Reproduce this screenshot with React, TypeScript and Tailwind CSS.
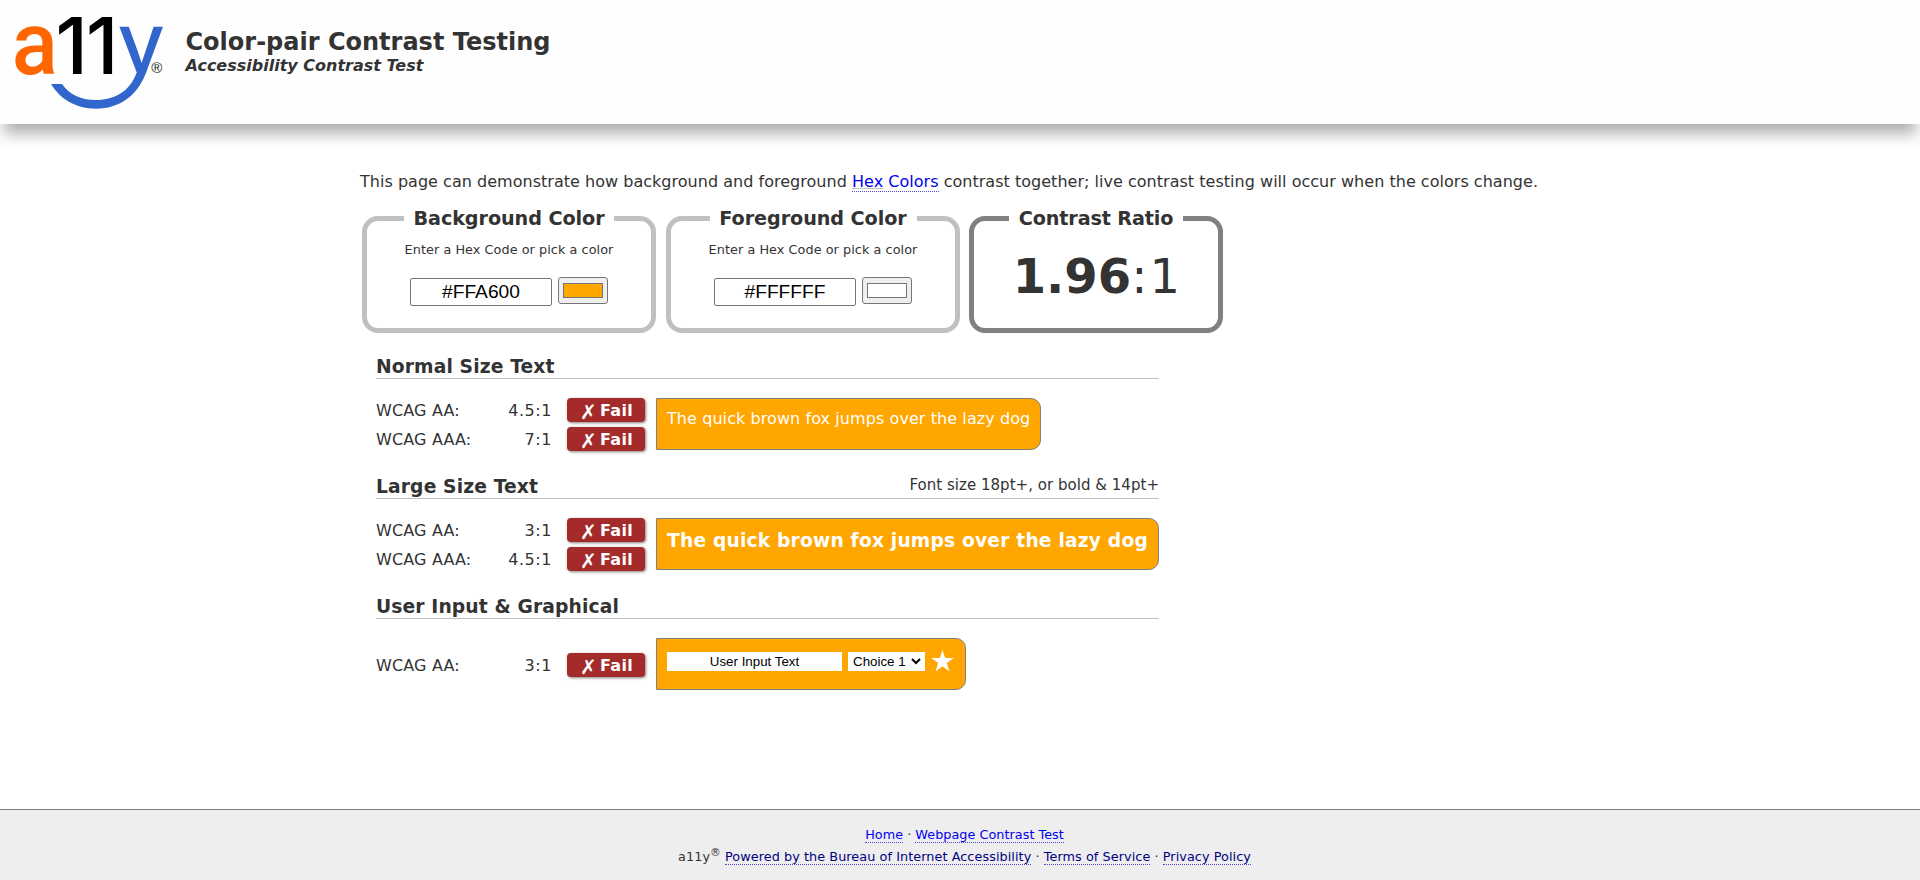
import React from "react";

function Logo() {
  return (
    <svg width="170" height="124" viewBox="0 0 170 124" className="shrink-0" role="img" aria-label="a11y">
      <defs>
        <clipPath id="arms">
          <rect x="110" y="0" width="60" height="74" />
        </clipPath>
      </defs>
      <g textAnchor="middle">
        <text transform="translate(34.9 73.5) scale(0.96 1)" fontFamily="Roboto, sans-serif" fontWeight="500" fontSize="89" fill="#ff6600">a</text>
        <text x="71.8" y="73.5" fontFamily="Inter, sans-serif" fontWeight="500" fontSize="78" fill="#000">1</text>
        <text x="102.2" y="73.5" fontFamily="Inter, sans-serif" fontWeight="500" fontSize="78" fill="#000">1</text>
        <g clipPath="url(#arms)">
          <text
            transform="translate(141.2 73.5) scale(0.95 1)"
            fontFamily="Liberation Sans, sans-serif"
            fontSize="88"
            fill="#3366cc"
            stroke="#3366cc"
            strokeWidth="1.5"
          >
            y
          </text>
        </g>
        <text x="156.8" y="73" fontSize="15" fill="#222" fontFamily="Liberation Sans, sans-serif">®</text>
      </g>
      <path
        d="M51 84H62C69 94 80 100 96 100C115 100 130 91 136.5 73L147.6 66L145.5 74C137 96 119 108.7 96 108.7C76 108.7 60 99 51 84Z"
        fill="#3366cc"
      />
    </svg>
  );
}

function ColorField({ title, width, value, swatch, gap }: { title: string; width: string; value: string; swatch: string; gap: string }) {
  return (
    <fieldset className={`h-[125px] w-[294px] rounded-[16px] border-[5px] border-[#c0c0c0] text-center ${gap}`}>
      <legend className={`mx-auto h-[21px] text-center text-[19.2px] leading-[21px] font-bold tracking-[-0.08px] whitespace-nowrap ${width}`}>
        {title}
      </legend>
      <p className="mt-[11px] text-[12.8px] leading-[20px] tracking-[0.06px]">Enter a Hex Code or pick a color</p>
      <div className="mt-[17px] flex pl-[43px]">
        <input
          readOnly
          value={value}
          className="mt-px h-[28px] w-[142px] rounded-[2px] border border-[#767676] bg-white text-center font-['Liberation_Sans',sans-serif] text-[19.2px] text-black"
        />
        <div className="ml-[6px] h-[27px] w-[50px] rounded-[3px] border border-[#767676] bg-[#efefef] px-[4px] py-[5px]">
          <div className={`h-[15px] border border-[#767676] ${swatch}`} />
        </div>
      </div>
    </fieldset>
  );
}

function Row({ label, ratio, gap }: { label: string; ratio: string; gap: string }) {
  return (
    <div className={`flex h-[24px] leading-[26px] ${gap}`}>
      <span className="w-[100px] tracking-[0.15px]">{label}</span>
      <span className="w-[76px] text-right tracking-[0.55px]">{ratio}</span>
      <span className="ml-[15px] flex w-[78px] rounded-[4px] bg-[#a52a2a] pl-[13px] font-bold text-white shadow-[1px_1px_3px_rgba(0,0,0,0.5)]">
        <span className="w-[20px] text-[20px] leading-[28px] font-normal">✗</span>
        <span className="tracking-[0.3px]">Fail</span>
      </span>
    </div>
  );
}

function Section({ title, note, rows, children }: { title: string; note?: string; rows: React.ReactNode; children: React.ReactNode }) {
  return (
    <section className="h-[120px] w-[783px]">
      <div className="flex h-[24px] justify-between border-b border-[#c0c0c0]">
        <h2 className="text-[18.72px] leading-[24px] font-bold tracking-[0.12px]">{title}</h2>
        {note && <span className="text-[15px] leading-[20px] tracking-[0.03px]">{note}</span>}
      </div>
      <div className="mt-[19px] flex">
        <div className="w-[280px]">{rows}</div>
        {children}
      </div>
    </section>
  );
}

const sample = "h-[52px] rounded-r-[10px] border border-[#808080] bg-[#ffa600] pl-[10px] text-white whitespace-nowrap";
const link = "border-b border-dotted border-[#4b4bd8]";

export default function App() {
  return (
    <div className="flex h-[880px] flex-col overflow-hidden bg-white font-['DejaVu_Sans',sans-serif] text-[16px] text-[#333]">
      <header className="flex h-[124px] shrink-0 bg-[#fefefe] shadow-[0_14px_14px_-4px_#b0b0b0]">
        <Logo />
        <div className="pt-[28px] pl-[15.5px] font-bold">
          <h1 className="text-[24px] leading-[28px]">Color-pair Contrast Testing</h1>
          <p className="text-[16px] leading-[20px] italic">Accessibility Contrast Test</p>
        </div>
      </header>

      <main className="flex-1 pt-[46px] pl-[360px]">
        <p className="leading-[24px] tracking-[0.025px] whitespace-nowrap">
          This page can demonstrate how background and foreground{" "}
          <a className={`${link} text-[#0000ee]`}>
            <span className="underline decoration-[#c0c0c0] decoration-1 underline-offset-[1px]">Hex</span> Colors
          </a>{" "}
          contrast together; live contrast testing will occur when the colors change.
        </p>

        <div className="mt-[14px] flex pl-[2px]">
          <ColorField title="Background Color" width="w-[210px]" value="#FFA600" swatch="bg-[#ffa600]" gap="mr-[10px]" />
          <ColorField title="Foreground Color" width="w-[207px]" value="#FFFFFF" swatch="bg-white" gap="mr-[9px]" />
          <fieldset className="h-[125px] w-[254px] rounded-[16px] border-[5px] border-[#808080] text-center">
            <legend className="mx-auto h-[21px] w-[174px] text-[19.2px] leading-[21px] font-bold tracking-[-0.15px] whitespace-nowrap">
              Contrast Ratio
            </legend>
            <p className="mt-[17px] pl-[3px] text-[48px] leading-[60px]">
              <b>1.96</b>
              <span className="tracking-[2.2px]">:1</span>
            </p>
          </fieldset>
        </div>

        <div className="mt-[22px] pl-[16px]">
          <Section
            title="Normal Size Text"
            rows={
              <>
                <Row label="WCAG AA:" ratio="4.5:1" gap="mb-[5px]" />
                <Row label="WCAG AAA:" ratio="7:1" gap="" />
              </>
            }
          >
            <div className={`${sample} w-[385px] pt-[7px] leading-[26px] tracking-[0.08px]`}>The quick brown fox jumps over the lazy dog</div>
          </Section>
          <Section
            title="Large Size Text"
            note="Font size 18pt+, or bold & 14pt+"
            rows={
              <>
                <Row label="WCAG AA:" ratio="3:1" gap="mb-[5px]" />
                <Row label="WCAG AAA:" ratio="4.5:1" gap="" />
              </>
            }
          >
            <div className={`${sample} w-[503px] pt-[8px] text-[18.66px] leading-[28px] font-bold tracking-[0.19px]`}>
              The quick brown fox jumps over the lazy dog
            </div>
          </Section>
          <Section title="User Input & Graphical" rows={<Row label="WCAG AA:" ratio="3:1" gap="mt-[15px]" />}>
            <div className={`${sample} flex w-[310px] pt-[13px]`}>
              <input
                readOnly
                value="User Input Text"
                className="h-[19px] w-[175px] bg-white text-center font-['Liberation_Sans',sans-serif] text-[13.33px] text-black"
              />
              <div className="ml-[6px] flex h-[19px] w-[77px] items-center bg-white pl-[5px] font-['Liberation_Sans',sans-serif] text-[13.33px] text-black">
                Choice 1
                <svg width="10" height="7" viewBox="0 0 10 7" className="ml-[5px]" fill="none" stroke="#000" strokeWidth="2">
                  <path d="M1 1l4 4 4-4" />
                </svg>
              </div>
              <svg width="23" height="22" viewBox="0 0 23 22" className="mt-[-2px] ml-[6px]" fill="#fff">
                <path d="M11.5 0l2.7 8.1h8.5l-6.9 5 2.7 8.3-7-5.1-7 5.1 2.7-8.3-6.9-5h8.5z" />
              </svg>
            </div>
          </Section>
        </div>
      </main>

      <footer className="h-[71px] shrink-0 border-t border-[#808080] bg-[#eee] pt-[14px] pl-[9px] text-center text-[12.8px] leading-[22px]">
        <p className="tracking-[0.03px]">
          <a className={`${link} text-[#0000ee]`}>Home</a> · <a className={`${link} text-[#0000ee]`}>Webpage Contrast Test</a>
        </p>
        <p className="tracking-[0.07px]">
          a11y<sup className="text-[10.7px]">®</sup>{" "}
          <a className={`${link} text-[#000080]`}>Powered by the Bureau of Internet Accessibility</a> ·{" "}
          <a className={`${link} text-[#000080]`}>Terms of Service</a> · <a className={`${link} text-[#000080]`}>Privacy Policy</a>
        </p>
      </footer>
    </div>
  );
}
